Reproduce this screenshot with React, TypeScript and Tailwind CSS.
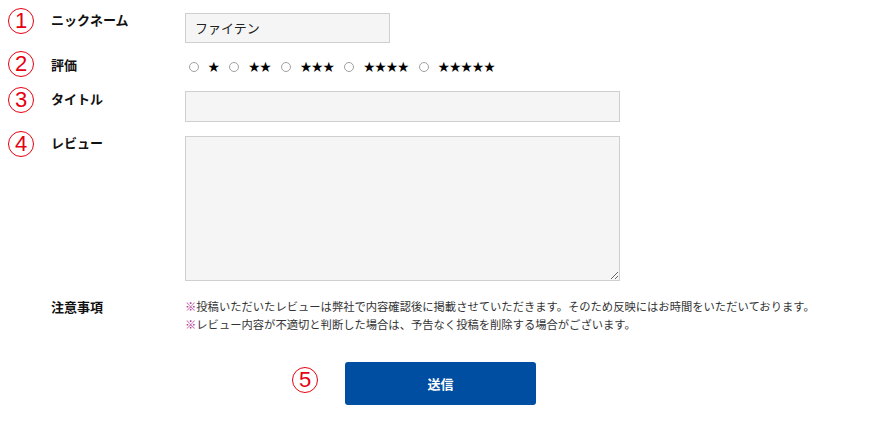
const JP = "font-['Noto_Sans_CJK_JP','Noto_Sans',sans-serif]";

function Num({ n, className = "" }: { n: string; className?: string }) {
  return (
    <span
      className={`flex h-[26px] w-[26px] shrink-0 items-center justify-center rounded-full border-[1.5px] border-[#e60012] font-['Liberation_Sans',sans-serif] text-[22px] leading-none text-[#e60012] ${className}`}
    >
      <span className="-mt-[1px]">{n}</span>
    </span>
  );
}

function Label({ children, className = "" }: { children: React.ReactNode; className?: string }) {
  return <div className={`w-[134px] shrink-0 text-[13px] font-bold leading-[20px] text-[#111] ${className}`}>{children}</div>;
}

function Radio({ stars }: { stars: number }) {
  return (
    <span className="mr-[10px] inline-flex items-center">
      <span className="h-[10px] w-[10px] rounded-full border border-[#a0a0a0] bg-white" />
      <span className="ml-[9px] text-[11.5px] leading-none tracking-[-0.1px] text-black">{"★".repeat(stars)}</span>
    </span>
  );
}

export default function App() {
  return (
    <div className={`${JP} h-[422px] w-[896px] bg-white pt-[8px] text-[#333]`}>
      {/* ① nickname */}
      <div className="flex h-[43px] items-start">
        <div className="w-[51px] shrink-0 pl-[8px]">
          <Num n="1" />
        </div>
        <Label className="mt-[2px]">ニックネーム</Label>
        <div className="mt-[5px] flex h-[30px] w-[205px] items-center border border-[#cfcfcf] bg-[#f5f5f5] px-[9px] text-[13px] text-[#222]">
          ファイテン
        </div>
      </div>

      {/* ② rating */}
      <div className="flex h-[36px] items-start">
        <div className="w-[51px] shrink-0 pl-[8px]">
          <Num n="2" />
        </div>
        <Label className="mt-[4px]">評価</Label>
        <div className="mt-[6px] flex h-[20px] items-center pl-[4px]">
          <Radio stars={1} />
          <Radio stars={2} />
          <Radio stars={3} />
          <Radio stars={4} />
          <Radio stars={5} />
        </div>
      </div>

      {/* ③ title */}
      <div className="flex h-[44px] items-start">
        <div className="w-[51px] shrink-0 pl-[8px]">
          <Num n="3" />
        </div>
        <Label className="mt-[2px]">タイトル</Label>
        <div className="mt-[4px] h-[31px] w-[435px] border border-[#cfcfcf] bg-[#f5f5f5]" />
      </div>

      {/* ④ review */}
      <div className="flex h-[166px] items-start">
        <div className="w-[51px] shrink-0 pl-[8px]">
          <Num n="4" />
        </div>
        <Label className="mt-[2px]">レビュー</Label>
        <textarea
          readOnly
          className="mt-[5px] block h-[145px] w-[435px] resize border border-[#cfcfcf] bg-[#f5f5f5] outline-none"
        />
      </div>

      {/* notes */}
      <div className="flex h-[65px] items-start">
        <div className="w-[51px] shrink-0" />
        <Label>注意事項</Label>
        <div className="text-[11.3px] leading-[18px] text-[#333]">
          <p>
            <span className="text-[#b0278e]">※</span>
            投稿いただいたレビューは弊社で内容確認後に掲載させていただきます。そのため反映にはお時間をいただいております。
          </p>
          <p>
            <span className="text-[#b0278e]">※</span>
            レビュー内容が不適切と判断した場合は、予告なく投稿を削除する場合がございます。
          </p>
        </div>
      </div>

      {/* ⑤ submit */}
      <div className="flex items-start pl-[292px]">
        <Num n="5" className="mt-[5px]" />
        <button
          type="button"
          className="ml-[27px] h-[43px] w-[191px] rounded-[3px] bg-[#004ea2] text-[13px] font-bold text-white"
        >
          送信
        </button>
      </div>
    </div>
  );
}
